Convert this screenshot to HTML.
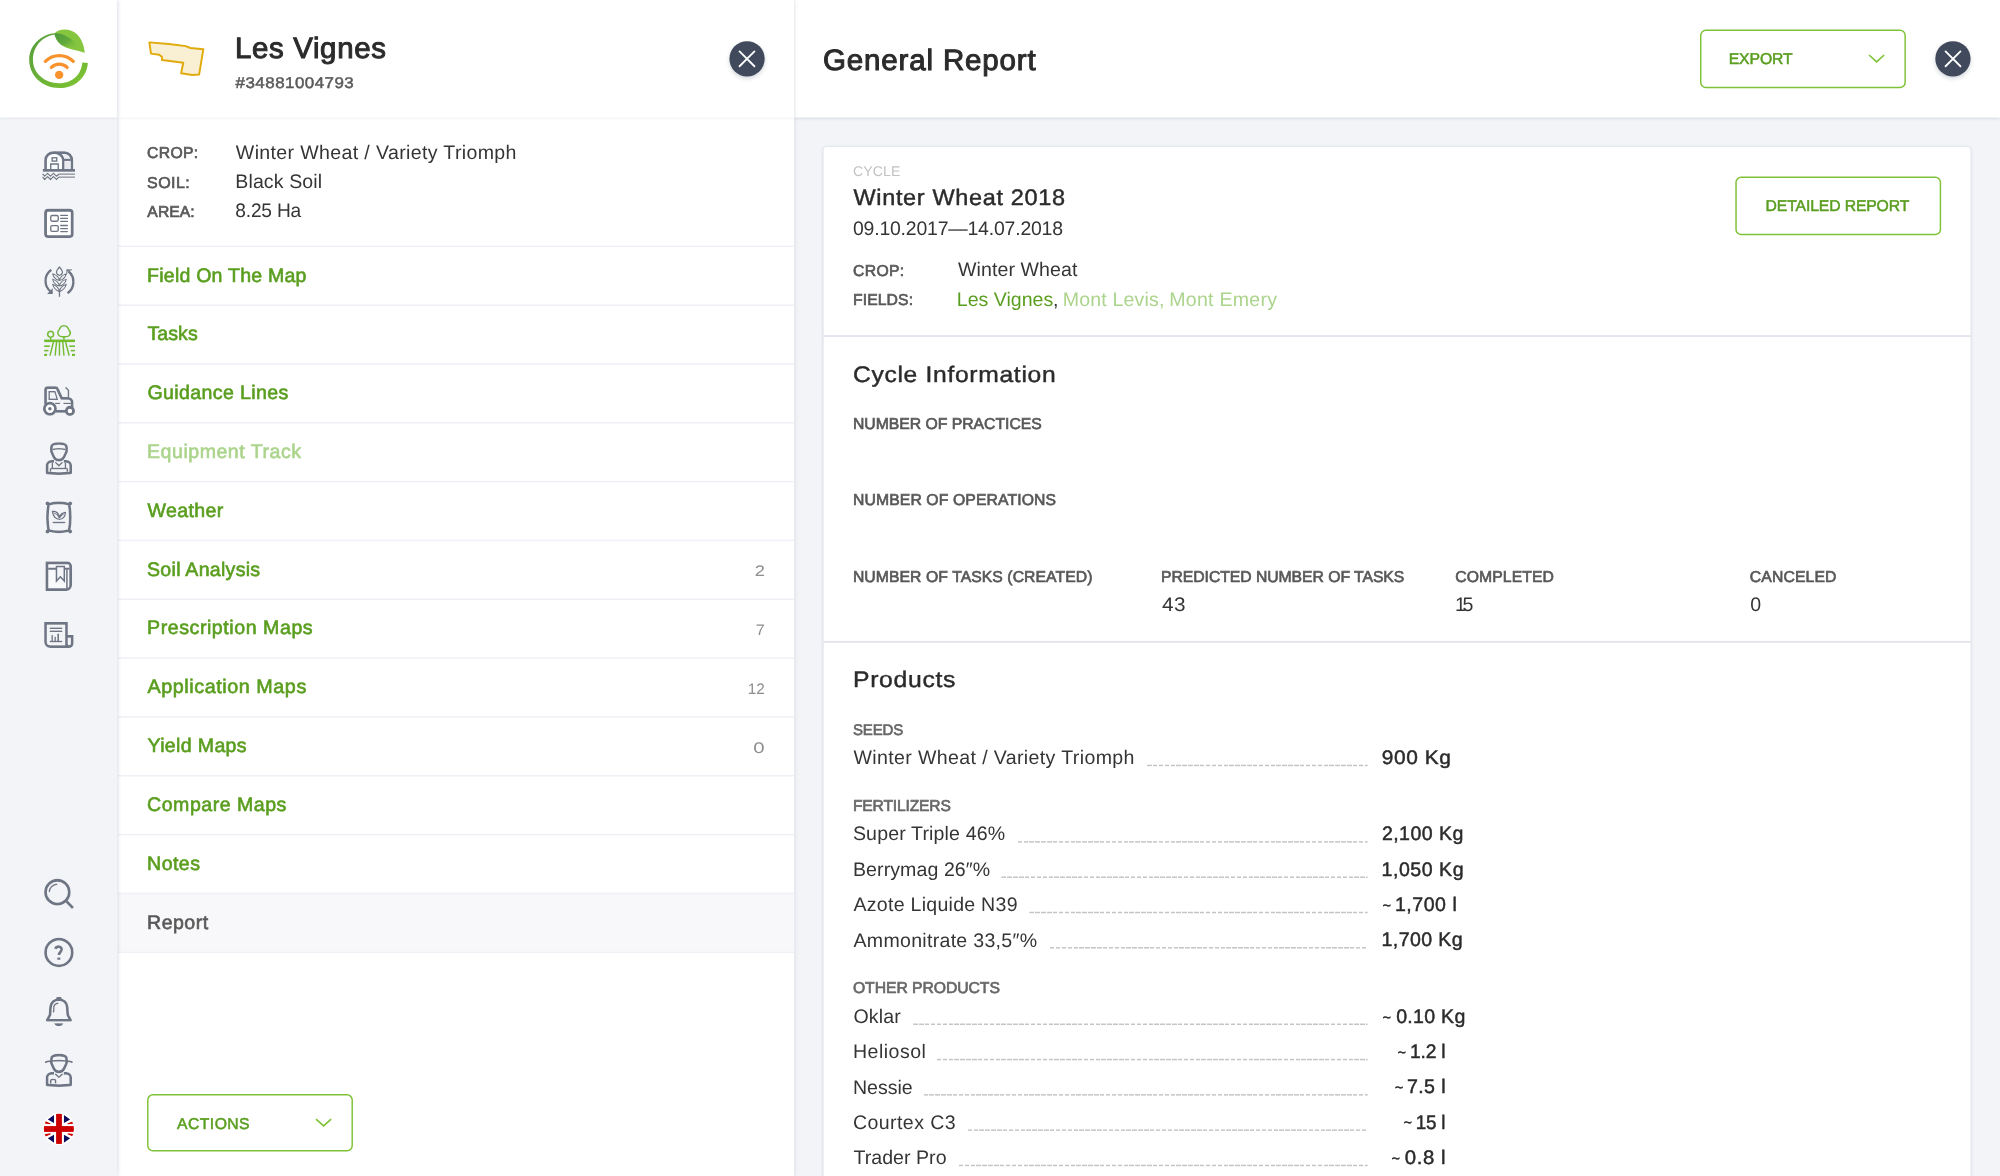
<!DOCTYPE html>
<html><head><meta charset="utf-8"><title>General Report</title>
<style>
html,body{margin:0;padding:0;width:2000px;height:1176px;overflow:hidden;background:#f2f4f8;}
#app{position:absolute;left:0;top:0;width:1360px;height:800px;transform:scale(1.470588);transform-origin:0 0;font-family:"Liberation Sans", sans-serif;overflow:hidden;background:#f2f4f8;}
.t{position:absolute;left:0;top:0;white-space:nowrap;transform-origin:0 0;text-rendering:geometricPrecision;}
.abs{position:absolute;}
#side{left:0;top:0;width:80px;height:800px;background:#f2f4f8;box-shadow:0.5px 0 2.2px rgba(60,70,110,.22);}
#logo{left:0;top:0;width:80px;height:80px;background:#fff;box-shadow:0 0.5px 2px rgba(60,70,110,.22);clip-path:inset(0 0 -6px 0);}
#lp{left:80px;top:0;width:460px;height:800px;background:#fff;box-shadow:0.5px 0 2.2px rgba(60,70,110,.12);}
#lph{left:80px;top:0;width:460px;height:80px;background:#fff;box-shadow:0 0.5px 2.4px rgba(60,70,110,.17);clip-path:inset(0 0 -6px 0);}
#rp{left:540px;top:0;width:820px;height:800px;background:#f2f4f8;}
#rph{left:540px;top:0;width:820px;height:80px;background:#fff;box-shadow:0 0.5px 2.2px rgba(60,70,110,.24);}
#card{left:560px;top:100px;width:780px;height:720px;background:#fff;border-radius:2px;box-shadow:0 0 2px rgba(60,70,100,.18);}
.chr{position:absolute;left:560px;width:780px;height:1px;background:#dadde7;}
.hr{position:absolute;left:80px;width:460px;height:1px;background:#eef0f5;}
#sel{left:80px;top:607.5px;width:460px;height:39.5px;background:#f8f8fa;}
.btn{position:absolute;box-sizing:border-box;border:1.15px solid #7ec237;border-radius:4px;background:#fff;}
.dots{position:absolute;height:1px;background:repeating-linear-gradient(90deg,#c4c4c4 0,#c4c4c4 3.05px,transparent 3.05px,transparent 4px);}
.close{position:absolute;width:24px;height:24px;border-radius:12px;background:#404a5c;box-shadow:0 1.5px 3px rgba(30,40,60,.18);}
.ic{position:absolute;overflow:visible;}
</style></head><body><div id="app">
<div id="rp" class="abs"></div>
<div id="card" class="abs"></div>
<div class="chr" style="top:227.6px"></div>
<div class="chr" style="top:435.6px"></div>
<div id="rph" class="abs"></div>
<div id="lp" class="abs"></div>
<div id="sel" class="abs"></div>
<div class="hr" style="top:167px"></div>
<div class="hr" style="top:207px"></div>
<div class="hr" style="top:247px"></div>
<div class="hr" style="top:287px"></div>
<div class="hr" style="top:327px"></div>
<div class="hr" style="top:367px"></div>
<div class="hr" style="top:407px"></div>
<div class="hr" style="top:447px"></div>
<div class="hr" style="top:487px"></div>
<div class="hr" style="top:527px"></div>
<div class="hr" style="top:567px"></div>
<div class="hr" style="top:607px"></div>
<div class="hr" style="top:647px"></div>
<div id="lph" class="abs"></div>
<div id="side" class="abs"></div>
<div id="logo" class="abs"></div>
<div class="btn" style="left:100px;top:744px;width:140px;height:39.3px"></div>
<div class="btn" style="left:1156px;top:20px;width:140px;height:39.8px"></div>
<div class="btn" style="left:1180px;top:120px;width:140px;height:39.6px"></div>
<div class="close" style="left:496px;top:28px"></div>
<div class="close" style="left:1316px;top:28px"></div>
<svg id="ov" style="position:absolute;left:0;top:0;overflow:visible" width="1360" height="800" viewBox="0 0 2000 1176.470588">
<defs><filter id="halo" x="-20%" y="-20%" width="140%" height="140%"><feDropShadow dx="0" dy="0" stdDeviation="0.7" flood-color="#fff" flood-opacity="1"/></filter></defs>
<g filter="url(#halo)">
<g transform="translate(37,142) scale(0.037415)" fill="none" stroke-linecap="butt" stroke-linejoin="round">
<path d="M228 722 V478 A212 196 0 0 1 440 283 H735 A195 196 0 0 1 930 478 V722 Z" fill="#fbfcfd" stroke="none"/>
<path d="M228 722 V478 A212 196 0 0 1 440 283 H735 A195 196 0 0 1 930 478 V722" stroke="#6e7585" stroke-width="72"/>
<path d="M440 283 A262 200 0 0 1 702 480 V722" stroke="#6e7585" stroke-width="64"/>
<path d="M665 322 C 770 330 850 380 885 452 L 730 452 C 720 400 700 355 665 322 Z" fill="#eceef3" stroke="none"/>
<path d="M720 478 H900" stroke="#6e7585" stroke-width="56"/>
<rect x="742" y="520" width="160" height="200" fill="#e9ebf1" stroke="none"/>
<rect x="405" y="422" width="122" height="88" stroke="#6e7585" stroke-width="36" stroke-linejoin="miter"/>
<path d="M367 722 V587 H567 V722" stroke="#6e7585" stroke-width="36" stroke-linejoin="miter"/>
<rect x="155" y="722" width="860" height="74" fill="#6e7585" stroke="none"/>
<path d="M148 848 L205 912 L282 838 L360 915 L440 838 L520 912 L590 860 H1015" stroke="#6e7585" stroke-width="34" stroke-linejoin="miter"/>
<path d="M148 930 L205 1002 L282 926 L360 1004 L440 926 L520 1002 L590 938 H1015" stroke="#6e7585" stroke-width="34" stroke-linejoin="miter"/>
</g>
<g transform="translate(37,201) scale(0.037415)" fill="none" stroke-linecap="butt" stroke-linejoin="round">
<rect x="228" y="248" width="714" height="704" rx="70" fill="#fff" stroke="#6e7585" stroke-width="76"/>
<rect x="367" y="388" width="201" height="154" rx="38" stroke="#6e7585" stroke-width="36"/>
<rect x="367" y="658" width="201" height="154" rx="38" stroke="#6e7585" stroke-width="36"/>
<path d="M635 385 H812 M635 465 H812 M635 545 H812 M635 655 H812 M635 737 H812 M635 817 H812" stroke="#6e7585" stroke-width="36" stroke-linecap="round"/>
</g>
<g transform="translate(37,260) scale(0.037415)" fill="none" stroke-linecap="butt" stroke-linejoin="round">
<path d="M385 262 C 180 400 175 700 372 850" stroke="#6e7585" stroke-width="66"/>
<path d="M268 906 H422 V750 Z" fill="#6e7585" stroke="none"/>
<path d="M815 888 C 1020 750 1025 450 838 300" stroke="#6e7585" stroke-width="66"/>
<path d="M782 248 H936 V276 L 820 300 L 800 392 H782 Z" fill="#6e7585" stroke="none"/>
<path d="M600 840 V985" stroke="#6e7585" stroke-width="38"/>
<path d="M600 188 C 545 250 512 300 524 345 C 540 392 580 405 600 412 C 620 405 660 392 676 345 C 688 300 655 250 600 188 Z" stroke="#6e7585" stroke-width="38"/>
<path d="M600 548 C 535 532 445 475 418 368 C 500 392 585 458 600 548 Z M600 548 C 665 532 755 475 782 368 C 700 392 615 458 600 548 Z" stroke="#6e7585" stroke-width="31"/>
<path d="M600 695 C 535 679 445 622 418 515 C 500 540 585 605 600 695 Z M600 695 C 665 679 755 622 782 515 C 700 540 615 605 600 695 Z" stroke="#6e7585" stroke-width="31"/>
<path d="M600 848 C 535 825 450 760 418 652 C 500 678 585 750 600 848 Z M600 848 C 665 825 750 760 782 652 C 700 678 615 750 600 848 Z" stroke="#6e7585" stroke-width="31"/>
</g>
<g transform="translate(37,318) scale(0.037415)" fill="none" stroke-linecap="butt" stroke-linejoin="round">
<rect x="190" y="572" width="826" height="74" fill="#74bd29" stroke="none"/>
<circle cx="365" cy="437" r="78" stroke="#74bd29" stroke-width="44"/>
<path d="M365 515 V600" stroke="#74bd29" stroke-width="44"/>
<path d="M720 207 C 640 207 612 262 602 302 C 560 340 548 402 574 450 C 600 498 660 505 720 505 C 780 505 850 498 876 450 C 902 402 882 340 842 302 C 830 262 800 207 720 207 Z" stroke="#74bd29" stroke-width="44"/>
<path d="M720 505 V600" stroke="#74bd29" stroke-width="44"/>
<path d="M440 640 L345 1010 M522 640 L485 1010 M600 640 V1010 M688 640 L722 1010 M765 640 L860 1010" stroke="#74bd29" stroke-width="44"/>
<path d="M190 750 H345 M860 750 H1015 M190 870 H310 M900 870 H1015" stroke="#74bd29" stroke-width="46"/>
<path d="M190 985 H270 M935 985 H1015" stroke="#74bd29" stroke-width="58"/>
</g>
<g transform="translate(37,378) scale(0.037415)" fill="none" stroke-linecap="butt" stroke-linejoin="round">
<path d="M228 700 V320 A62 62 0 0 1 290 258 H500 A50 50 0 0 1 545 290 L660 545 H830 A108 108 0 0 1 938 653 V790" stroke="#6e7585" stroke-width="74"/>
<path d="M490 892 H770" stroke="#6e7585" stroke-width="72"/>
<circle cx="345" cy="820" r="150" fill="#fff" stroke="#6e7585" stroke-width="74"/>
<circle cx="345" cy="820" r="46" fill="#6e7585" stroke="none"/>
<circle cx="880" cy="880" r="98" fill="#fff" stroke="#6e7585" stroke-width="76"/>
<path d="M325 365 H480 L540 565 H325 Z" stroke="#6e7585" stroke-width="40" stroke-linejoin="miter"/>
<path d="M762 250 L840 328 V520" stroke="#6e7585" stroke-width="40" stroke-linejoin="miter"/>
<path d="M485 680 H615 M705 680 H905" stroke="#6e7585" stroke-width="34"/>
</g>
<g transform="translate(37,436) scale(0.037415)" fill="none" stroke-linecap="butt" stroke-linejoin="round">
<path d="M455 680 H380 A110 110 0 0 0 270 790 V985 C 470 1012 700 1012 900 985 V790 A110 110 0 0 0 790 680 H715" stroke="#6e7585" stroke-width="72"/>
<path d="M385 300 C 385 225 470 200 585 200 C 700 200 790 225 790 300 V415 L 722 560 C 690 625 640 645 585 645 C 530 645 480 625 450 560 L 385 415 Z" stroke="#6e7585" stroke-width="72"/>
<path d="M488 700 L585 792 L682 700" stroke="#6e7585" stroke-width="40" stroke-linejoin="miter"/>
<path d="M420 362 C 500 335 670 335 752 362" stroke="#6e7585" stroke-width="42"/>
<path d="M410 715 V865 M760 715 V865 M375 868 H795 M360 862 V955 M810 862 V955" stroke="#6e7585" stroke-width="40"/></g>
<g transform="translate(37,495) scale(0.037415)" fill="none" stroke-linecap="butt" stroke-linejoin="round">
<path d="M312 248 C 480 205 690 205 858 248 C 900 480 900 720 858 950 C 690 995 480 995 312 950 C 268 720 268 480 312 248 Z" stroke="#6e7585" stroke-width="72"/>
<circle cx="280" cy="225" r="52" fill="#6e7585" stroke="none"/><circle cx="887" cy="225" r="52" fill="#6e7585" stroke="none"/>
<circle cx="280" cy="975" r="52" fill="#6e7585" stroke="none"/><circle cx="887" cy="975" r="52" fill="#6e7585" stroke="none"/>
<path d="M412 437 C 505 432 575 490 598 590 C 635 505 700 470 760 467 C 752 565 700 640 600 652 C 500 640 430 562 412 437 Z" stroke="#6e7585" stroke-width="38"/>
<path d="M458 488 C 525 505 575 555 598 620 M715 508 C 662 525 622 565 602 620" stroke="#6e7585" stroke-width="34"/>
<path d="M435 735 H740" stroke="#6e7585" stroke-width="40" stroke-linecap="round"/>
</g>
<g transform="translate(37,554) scale(0.037415)" fill="none" stroke-linecap="butt" stroke-linejoin="round">
<path d="M265 238 H815 A85 85 0 0 1 900 323 V835 A115 115 0 0 1 785 950 H265 Z" fill="#f8f9fb" stroke="#6e7585" stroke-width="72" stroke-linejoin="miter"/>
<path d="M300 395 H515 M740 395 H865" stroke="#6e7585" stroke-width="52"/>
<path d="M800 420 V915" stroke="#6e7585" stroke-width="40"/>
<path d="M520 335 H730 V722 L625 610 L520 722 Z" fill="#f3f5f9" stroke="#6e7585" stroke-width="40" stroke-linejoin="miter"/>
</g>
<g transform="translate(37,613) scale(0.037415)" fill="none" stroke-linecap="butt" stroke-linejoin="round">
<path d="M788 845 V275 H228 V775 A125 125 0 0 0 353 900 H855 A85 85 0 0 0 940 815 V625 H790" stroke="#6e7585" stroke-width="72" stroke-linejoin="miter"/>
<path d="M788 830 A70 70 0 0 0 858 900" stroke="#6e7585" stroke-width="72"/>
<path d="M355 410 H660 M355 490 H660 M355 765 H660" stroke="#6e7585" stroke-width="40" stroke-linecap="round"/>
<path d="M405 600 V750 M485 645 V750" stroke="#6e7585" stroke-width="40" stroke-linecap="round"/>
<path d="M565 568 V750" stroke="#6e7585" stroke-width="46" stroke-linecap="round"/>
</g>
<g transform="translate(37,871) scale(0.037415)" fill="none" stroke-linecap="butt" stroke-linejoin="round">
<circle cx="545" cy="565" r="318" stroke="#6e7585" stroke-width="74"/>
<path d="M785 810 L962 988" stroke="#6e7585" stroke-width="76"/>
<path d="M330 548 A216 216 0 0 1 528 352" stroke="#6e7585" stroke-width="40" stroke-linecap="round"/>
</g>
<g transform="translate(37,930) scale(0.037415)" fill="none" stroke-linecap="butt" stroke-linejoin="round">
<circle cx="585" cy="600" r="357" stroke="#6e7585" stroke-width="74"/>
<path d="M492 505 C 505 440 620 415 655 490 C 688 565 592 590 582 668" stroke="#6e7585" stroke-width="74"/>
<rect x="540" y="735" width="86" height="62" fill="#6e7585" stroke="none"/>
</g>
<g transform="translate(37,989) scale(0.037415)" fill="none" stroke-linecap="butt" stroke-linejoin="round">
<path d="M272 835 L345 700 C 362 640 350 560 365 470 C 385 340 480 287 585 287 C 690 287 785 340 805 470 C 820 560 808 640 825 700 L898 835 Z" stroke="#6e7585" stroke-width="72"/>
<path d="M548 247 H624" stroke="#6e7585" stroke-width="70" stroke-linecap="round"/>
<path d="M460 915 H702 C 690 970 640 992 581 992 C 522 992 472 970 460 915 Z" fill="#6e7585" stroke="none"/>
<path d="M558 378 C 470 390 442 460 450 525 C 454 560 450 590 440 612" stroke="#6e7585" stroke-width="40" stroke-linecap="round"/>
</g>
<g transform="translate(37,1048) scale(0.037415)" fill="none" stroke-linecap="butt" stroke-linejoin="round">
<path d="M455 680 H380 A110 110 0 0 0 270 790 V985 C 470 1012 700 1012 900 985 V790 A110 110 0 0 0 790 680 H715" stroke="#6e7585" stroke-width="72"/>
<path d="M385 292 C 385 217 470 192 585 192 C 700 192 790 217 790 292 V407 L 722 552 C 690 617 640 637 585 637 C 530 637 480 617 450 552 L 385 407 Z" stroke="#6e7585" stroke-width="72"/>
<path d="M488 692 L585 784 L682 692" stroke="#6e7585" stroke-width="40" stroke-linejoin="miter"/>
<path d="M232 378 C 330 345 450 338 585 338 C 720 338 840 345 936 378" stroke="#6e7585" stroke-width="44" stroke-linecap="round"/>
<path d="M367 950 V878 A36 36 0 0 1 403 842 H460 A36 36 0 0 1 496 878 V950" stroke="#6e7585" stroke-width="44"/></g>
<g transform="translate(37,1107) scale(0.037415)" fill="none" stroke-linecap="butt" stroke-linejoin="round">
<defs><clipPath id="fc"><circle cx="585" cy="585" r="402"/></clipPath></defs>
<circle cx="585" cy="585" r="425" fill="#fff" stroke="none"/>
<g clip-path="url(#fc)" stroke="none">
<path d="M290 335 L455 215 V425 Z M720 215 L885 335 L720 425 Z M290 835 L455 745 V955 Z M720 745 L885 835 L720 955 Z" fill="#08085f"/>
<path d="M205 368 L362 440 L352 462 L195 440 Z M965 378 L812 442 L822 464 L972 446 Z M205 800 L368 726 L358 704 L195 730 Z M965 790 L816 726 L826 704 L972 724 Z" fill="#cc0000"/>
<rect x="510" y="160" width="156" height="850" fill="#cc0000"/>
<rect x="160" y="510" width="850" height="156" fill="#cc0000"/>
</g>
</g>
</g>
<g transform="translate(19,19) scale(0.068027)">
<defs>
<linearGradient id="lg1" x1="0.1" y1="0.1" x2="0.9" y2="0.9"><stop offset="0" stop-color="#58a03a"/><stop offset="1" stop-color="#7cc232"/></linearGradient>
<linearGradient id="lg2" x1="0" y1="0.1" x2="1" y2="0.9"><stop offset="0" stop-color="#4d993d"/><stop offset="0.5" stop-color="#62aa3b"/><stop offset="1" stop-color="#86c63f" stop-opacity="0"/></linearGradient>
</defs>
<path d="M525 208 C 330 225 150 380 150 600 C 150 830 340 1015 590 1015 C 830 1015 1000 850 1012 645 L 930 640 C 920 810 790 945 590 945 C 380 945 205 800 205 600 C 205 400 350 250 528 228 Z" fill="url(#lg1)"/>
<path d="M520 212 C 580 150 720 130 820 200 C 920 270 960 400 966 497 C 860 455 700 450 610 370 C 555 320 530 265 520 212 Z" fill="#86c63f"/>
<path d="M520 212 C 640 200 800 290 900 440 C 800 430 690 420 610 370 C 555 320 530 265 520 212 Z" fill="url(#lg2)"/>
<circle cx="590" cy="822" r="61" fill="#f8922d"/>
<path d="M476 712 A 165 165 0 0 1 708 712" fill="none" stroke="#f8922d" stroke-width="48" stroke-linecap="round"/>
<path d="M388 622 A 290 290 0 0 1 798 622" fill="none" stroke="#f8922d" stroke-width="48" stroke-linecap="round"/>
</g>
<g transform="translate(140,30) scale(0.046758)">
<path d="M200 265 L620 300 L980 345 L1080 385 L1355 410 L1265 950 L1120 962 L880 925 L925 700 L470 640 L470 575 L410 530 L235 505 Z" fill="#f9efd3" stroke="#e0ab0d" stroke-width="42" stroke-linejoin="round"/>
</g>
<path d="M316.05 1119.10 L323.60 1125.90 L331.15 1119.10" fill="none" stroke="#7ec237" stroke-width="1.6"/><path d="M1869.05 55.00 L1876.60 61.80 L1884.15 55.00" fill="none" stroke="#7ec237" stroke-width="1.6"/><path d="M739.55 51.35 L754.45 66.25 M754.45 51.35 L739.55 66.25" fill="none" stroke="#fff" stroke-width="1.8" stroke-linecap="round"/><path d="M1945.55 51.35 L1960.45 66.25 M1960.45 51.35 L1945.55 66.25" fill="none" stroke="#fff" stroke-width="1.8" stroke-linecap="round"/>
</svg>

<div class="dots" style="left:779.65px;width:150.85px;top:519.60px"></div>
<div class="dots" style="left:691.93px;width:238.57px;top:571.60px"></div>
<div class="dots" style="left:680.98px;width:249.52px;top:595.90px"></div>
<div class="dots" style="left:700.09px;width:230.41px;top:619.85px"></div>
<div class="dots" style="left:713.56px;width:216.94px;top:643.80px"></div>
<div class="dots" style="left:620.60px;width:309.90px;top:695.70px"></div>
<div class="dots" style="left:636.78px;width:293.72px;top:719.70px"></div>
<div class="dots" style="left:628.08px;width:302.42px;top:743.70px"></div>
<div class="dots" style="left:657.73px;width:272.77px;top:767.70px"></div>
<div class="dots" style="left:651.61px;width:278.89px;top:791.70px"></div>
<div class="t" style="transform:translate(159.73px,23.65px);font-size:20px;line-height:20px;color:#2b2b2b;letter-spacing:0.455px;word-spacing:0px;font-weight:400;-webkit-text-stroke:0.034em currentColor;">Les Vignes</div>
<div class="t" style="transform:translate(160.21px,51.68px) scaleX(1.0859);font-size:10.6px;line-height:10.6px;color:#5a5a5a;letter-spacing:0.297px;word-spacing:0px;font-weight:400;-webkit-text-stroke:0.032em currentColor;">#34881004793</div>
<div class="t" style="transform:translate(100.00px,99.63px);font-size:10.7px;line-height:10.7px;color:#575757;letter-spacing:0.225px;word-spacing:0px;font-weight:400;-webkit-text-stroke:0.042em currentColor;">CROP:</div>
<div class="t" style="transform:translate(100.00px,119.62px) scaleX(1.0180);font-size:10.7px;line-height:10.7px;color:#575757;letter-spacing:0.300px;word-spacing:0px;font-weight:400;-webkit-text-stroke:0.042em currentColor;">SOIL:</div>
<div class="t" style="transform:translate(100.20px,139.61px);font-size:10.7px;line-height:10.7px;color:#575757;letter-spacing:0.034px;word-spacing:0px;font-weight:400;-webkit-text-stroke:0.042em currentColor;">AREA:</div>
<div class="t" style="transform:translate(160.35px,96.85px);font-size:13.3px;line-height:13.3px;color:#353535;letter-spacing:0.245px;word-spacing:0px;font-weight:400;">Winter Wheat / Variety Triomph</div>
<div class="t" style="transform:translate(160.00px,116.84px);font-size:13.3px;line-height:13.3px;color:#353535;letter-spacing:0.071px;word-spacing:0px;font-weight:400;">Black Soil</div>
<div class="t" style="transform:translate(160.00px,136.83px) scaleX(0.9799);font-size:13.3px;line-height:13.3px;color:#353535;letter-spacing:-0.133px;word-spacing:0px;font-weight:400;">8.25 Ha</div>
<div class="t" style="transform:translate(100.00px,180.44px);font-size:13.3px;line-height:13.3px;color:#5a9e1f;letter-spacing:0.149px;word-spacing:0px;font-weight:400;-webkit-text-stroke:0.032em currentColor;">Field On The Map</div>
<div class="t" style="transform:translate(100.30px,220.44px);font-size:13.3px;line-height:13.3px;color:#5a9e1f;letter-spacing:0.038px;word-spacing:0px;font-weight:400;-webkit-text-stroke:0.032em currentColor;">Tasks</div>
<div class="t" style="transform:translate(100.30px,260.44px);font-size:13.3px;line-height:13.3px;color:#5a9e1f;letter-spacing:0.257px;word-spacing:0px;font-weight:400;-webkit-text-stroke:0.032em currentColor;">Guidance Lines</div>
<div class="t" style="transform:translate(100.00px,300.44px);font-size:13.3px;line-height:13.3px;color:#abd48c;letter-spacing:0.350px;word-spacing:0px;font-weight:400;-webkit-text-stroke:0.032em currentColor;">Equipment Track</div>
<div class="t" style="transform:translate(100.30px,340.44px);font-size:13.3px;line-height:13.3px;color:#5a9e1f;letter-spacing:0.253px;word-spacing:0px;font-weight:400;-webkit-text-stroke:0.032em currentColor;">Weather</div>
<div class="t" style="transform:translate(100.00px,380.44px);font-size:13.3px;line-height:13.3px;color:#5a9e1f;letter-spacing:0.184px;word-spacing:0px;font-weight:400;-webkit-text-stroke:0.032em currentColor;">Soil Analysis</div>
<div class="t" style="transform:translate(513.16px,384.91px) scaleX(1.1996);font-size:10.4px;line-height:10.4px;color:#8e8e8e;letter-spacing:0.000px;word-spacing:0px;font-weight:400;">2</div>
<div class="t" style="transform:translate(100.00px,420.44px) scaleX(1.0021);font-size:13.3px;line-height:13.3px;color:#5a9e1f;letter-spacing:0.372px;word-spacing:0px;font-weight:400;-webkit-text-stroke:0.032em currentColor;">Prescription Maps</div>
<div class="t" style="transform:translate(513.90px,424.91px) scaleX(1.0601);font-size:10.4px;line-height:10.4px;color:#8e8e8e;letter-spacing:0.000px;word-spacing:0px;font-weight:400;">7</div>
<div class="t" style="transform:translate(100.30px,460.44px) scaleX(1.0105);font-size:13.3px;line-height:13.3px;color:#5a9e1f;letter-spacing:0.372px;word-spacing:0px;font-weight:400;-webkit-text-stroke:0.032em currentColor;">Application Maps</div>
<div class="t" style="transform:translate(508.40px,464.91px);font-size:10.4px;line-height:10.4px;color:#8e8e8e;letter-spacing:0.044px;word-spacing:0px;font-weight:400;">12</div>
<div class="t" style="transform:translate(100.30px,500.44px);font-size:13.3px;line-height:13.3px;color:#5a9e1f;letter-spacing:0.233px;word-spacing:0px;font-weight:400;-webkit-text-stroke:0.032em currentColor;">Yield Maps</div>
<div class="t" style="transform:translate(512.22px,504.91px) scaleX(1.3338);font-size:10.4px;line-height:10.4px;color:#8e8e8e;letter-spacing:0.000px;word-spacing:0px;font-weight:400;">0</div>
<div class="t" style="transform:translate(100.00px,540.44px);font-size:13.3px;line-height:13.3px;color:#5a9e1f;letter-spacing:0.348px;word-spacing:0px;font-weight:400;-webkit-text-stroke:0.032em currentColor;">Compare Maps</div>
<div class="t" style="transform:translate(100.00px,580.44px);font-size:13.3px;line-height:13.3px;color:#5a9e1f;letter-spacing:0.314px;word-spacing:0px;font-weight:400;-webkit-text-stroke:0.032em currentColor;">Notes</div>
<div class="t" style="transform:translate(100.00px,620.44px);font-size:13.3px;line-height:13.3px;color:#595959;letter-spacing:0.320px;word-spacing:0px;font-weight:400;-webkit-text-stroke:0.032em currentColor;">Report</div>
<div class="t" style="transform:translate(120.43px,759.48px);font-size:10.7px;line-height:10.7px;color:#5a9e1f;letter-spacing:0.297px;word-spacing:0px;font-weight:400;-webkit-text-stroke:0.032em currentColor;">ACTIONS</div>
<div class="t" style="transform:translate(559.65px,31.42px) scaleX(1.0042);font-size:20px;line-height:20px;color:#2b2b2b;letter-spacing:0.560px;word-spacing:0px;font-weight:400;-webkit-text-stroke:0.034em currentColor;">General Report</div>
<div class="t" style="transform:translate(1175.50px,35.68px);font-size:10.7px;line-height:10.7px;color:#5a9e1f;letter-spacing:-0.043px;word-spacing:0px;font-weight:400;-webkit-text-stroke:0.032em currentColor;">EXPORT</div>
<div class="t" style="transform:translate(580.00px,113.00px);font-size:9.6px;line-height:9.6px;color:#c2c2c2;letter-spacing:0.073px;word-spacing:0px;font-weight:400;">CYCLE</div>
<div class="t" style="transform:translate(580.35px,127.59px) scaleX(1.0446);font-size:15.3px;line-height:15.3px;color:#2b2b2b;letter-spacing:0.428px;word-spacing:0px;font-weight:400;-webkit-text-stroke:0.019em currentColor;">Winter Wheat 2018</div>
<div class="t" style="transform:translate(580.00px,149.10px) scaleX(0.9939);font-size:13.3px;line-height:13.3px;color:#353535;letter-spacing:-0.133px;word-spacing:0px;font-weight:400;">09.10.2017—14.07.2018</div>
<div class="t" style="transform:translate(580.00px,179.68px);font-size:10.7px;line-height:10.7px;color:#575757;letter-spacing:0.259px;word-spacing:0px;font-weight:400;-webkit-text-stroke:0.042em currentColor;">CROP:</div>
<div class="t" style="transform:translate(580.00px,199.68px);font-size:10.7px;line-height:10.7px;color:#575757;letter-spacing:0.078px;word-spacing:0px;font-weight:400;-webkit-text-stroke:0.042em currentColor;">FIELDS:</div>
<div class="t" style="transform:translate(651.44px,176.90px);font-size:13.3px;line-height:13.3px;color:#353535;letter-spacing:0.060px;word-spacing:0px;font-weight:400;">Winter Wheat</div>
<div class="t" style="transform:translate(650.60px,196.90px);font-size:13.3px;line-height:13.3px;color:#5a9e1f;letter-spacing:0.002px;word-spacing:0px;font-weight:400;">Les Vignes</div>
<div class="t" style="transform:translate(716.09px,196.90px);font-size:13.3px;line-height:13.3px;color:#353535;letter-spacing:0.450px;word-spacing:0px;font-weight:400;">,</div>
<div class="t" style="transform:translate(722.65px,196.90px);font-size:13.3px;line-height:13.3px;color:#abd48c;letter-spacing:0.118px;word-spacing:0px;font-weight:400;">Mont Levis,</div>
<div class="t" style="transform:translate(795.07px,196.90px);font-size:13.3px;line-height:13.3px;color:#abd48c;letter-spacing:0.178px;word-spacing:0px;font-weight:400;">Mont Emery</div>
<div class="t" style="transform:translate(1200.59px,135.73px);font-size:10.7px;line-height:10.7px;color:#5a9e1f;letter-spacing:-0.075px;word-spacing:0px;font-weight:400;-webkit-text-stroke:0.032em currentColor;">DETAILED REPORT</div>
<div class="t" style="transform:translate(580.00px,247.65px) scaleX(1.0950);font-size:15.3px;line-height:15.3px;color:#2b2b2b;letter-spacing:0.428px;word-spacing:0px;font-weight:400;-webkit-text-stroke:0.019em currentColor;">Cycle Information</div>
<div class="t" style="transform:translate(580.00px,283.68px);font-size:10.7px;line-height:10.7px;color:#575757;letter-spacing:0.009px;word-spacing:0px;font-weight:400;-webkit-text-stroke:0.042em currentColor;">NUMBER OF PRACTICES</div>
<div class="t" style="transform:translate(580.00px,335.68px);font-size:10.7px;line-height:10.7px;color:#575757;letter-spacing:0.093px;word-spacing:0px;font-weight:400;-webkit-text-stroke:0.042em currentColor;">NUMBER OF OPERATIONS</div>
<div class="t" style="transform:translate(580.00px,387.78px);font-size:10.7px;line-height:10.7px;color:#575757;letter-spacing:0.056px;word-spacing:0px;font-weight:400;-webkit-text-stroke:0.042em currentColor;">NUMBER OF TASKS (CREATED)</div>
<div class="t" style="transform:translate(789.46px,387.78px);font-size:10.7px;line-height:10.7px;color:#575757;letter-spacing:-0.017px;word-spacing:0px;font-weight:400;-webkit-text-stroke:0.042em currentColor;">PREDICTED NUMBER OF TASKS</div>
<div class="t" style="transform:translate(989.65px,387.78px);font-size:10.7px;line-height:10.7px;color:#575757;letter-spacing:0.056px;word-spacing:0px;font-weight:400;-webkit-text-stroke:0.042em currentColor;">COMPLETED</div>
<div class="t" style="transform:translate(1189.91px,387.78px);font-size:10.7px;line-height:10.7px;color:#575757;letter-spacing:0.096px;word-spacing:0px;font-weight:400;-webkit-text-stroke:0.042em currentColor;">CANCELED</div>
<div class="t" style="transform:translate(790.08px,404.60px) scaleX(1.0611);font-size:13.3px;line-height:13.3px;color:#353535;letter-spacing:0.372px;word-spacing:0px;font-weight:400;">43</div>
<div class="t" style="transform:translate(989.45px,404.60px);font-size:13.3px;line-height:13.3px;color:#353535;letter-spacing:0.450px;word-spacing:0px;font-weight:400;">1</div>
<div class="t" style="transform:translate(994.56px,404.60px);font-size:13.3px;line-height:13.3px;color:#353535;letter-spacing:0.450px;word-spacing:0px;font-weight:400;">5</div>
<div class="t" style="transform:translate(1190.13px,404.60px);font-size:13.3px;line-height:13.3px;color:#353535;letter-spacing:0.450px;word-spacing:0px;font-weight:400;">0</div>
<div class="t" style="transform:translate(580.00px,455.45px) scaleX(1.0998);font-size:15.3px;line-height:15.3px;color:#2b2b2b;letter-spacing:0.428px;word-spacing:0px;font-weight:400;-webkit-text-stroke:0.019em currentColor;">Products</div>
<div class="t" style="transform:translate(580.00px,492.49px) scaleX(0.9817);font-size:10.4px;line-height:10.4px;color:#666;letter-spacing:-0.104px;word-spacing:0px;font-weight:400;-webkit-text-stroke:0.042em currentColor;">SEEDS</div>
<div class="t" style="transform:translate(580.00px,543.38px) scaleX(0.9928);font-size:10.7px;line-height:10.7px;color:#666;letter-spacing:-0.107px;word-spacing:0px;font-weight:400;-webkit-text-stroke:0.042em currentColor;">FERTILIZERS</div>
<div class="t" style="transform:translate(580.00px,667.38px);font-size:10.7px;line-height:10.7px;color:#666;letter-spacing:-0.034px;word-spacing:0px;font-weight:400;-webkit-text-stroke:0.042em currentColor;">OTHER PRODUCTS</div>
<div class="t" style="transform:translate(580.35px,508.50px);font-size:13.3px;line-height:13.3px;color:#353535;letter-spacing:0.252px;word-spacing:0px;font-weight:400;">Winter Wheat / Variety Triomph</div>
<div class="t" style="transform:translate(939.64px,508.34px) scaleX(1.0683);font-size:13.3px;line-height:13.3px;color:#2b2b2b;letter-spacing:0.372px;word-spacing:0px;font-weight:400;-webkit-text-stroke:0.024em currentColor;">900 Kg</div>
<div class="t" style="transform:translate(580.00px,560.50px);font-size:13.3px;line-height:13.3px;color:#353535;letter-spacing:0.096px;word-spacing:0px;font-weight:400;">Super Triple 46%</div>
<div class="t" style="transform:translate(939.68px,560.34px);font-size:13.3px;line-height:13.3px;color:#2b2b2b;letter-spacing:0.302px;word-spacing:0px;font-weight:400;-webkit-text-stroke:0.024em currentColor;">2,100 Kg</div>
<div class="t" style="transform:translate(580.00px,584.80px);font-size:13.3px;line-height:13.3px;color:#353535;letter-spacing:0.058px;word-spacing:0px;font-weight:400;">Berrymag 26″%</div>
<div class="t" style="transform:translate(939.47px,584.64px);font-size:13.3px;line-height:13.3px;color:#2b2b2b;letter-spacing:0.361px;word-spacing:0px;font-weight:400;-webkit-text-stroke:0.024em currentColor;">1,050 Kg</div>
<div class="t" style="transform:translate(580.35px,608.75px);font-size:13.3px;line-height:13.3px;color:#353535;letter-spacing:0.181px;word-spacing:0px;font-weight:400;">Azote Liquide N39</div>
<div class="t" style="transform:translate(948.52px,608.59px);font-size:13.3px;line-height:13.3px;color:#2b2b2b;letter-spacing:0.361px;word-spacing:0px;font-weight:400;-webkit-text-stroke:0.024em currentColor;">1,700 l</div>
<div class="t" style="transform:translate(940.21px,610.81px);font-size:9.4px;line-height:9.4px;color:#2b2b2b;letter-spacing:0.350px;word-spacing:0px;font-weight:400;-webkit-text-stroke:0.042em currentColor;">~</div>
<div class="t" style="transform:translate(580.35px,632.70px);font-size:13.3px;line-height:13.3px;color:#353535;letter-spacing:0.200px;word-spacing:0px;font-weight:400;">Ammonitrate 33,5″%</div>
<div class="t" style="transform:translate(939.47px,632.54px);font-size:13.3px;line-height:13.3px;color:#2b2b2b;letter-spacing:0.264px;word-spacing:0px;font-weight:400;-webkit-text-stroke:0.024em currentColor;">1,700 Kg</div>
<div class="t" style="transform:translate(580.35px,684.60px);font-size:13.3px;line-height:13.3px;color:#353535;letter-spacing:0.116px;word-spacing:0px;font-weight:400;">Oklar</div>
<div class="t" style="transform:translate(949.41px,684.44px);font-size:13.3px;line-height:13.3px;color:#2b2b2b;letter-spacing:0.191px;word-spacing:0px;font-weight:400;-webkit-text-stroke:0.024em currentColor;">0.10 Kg</div>
<div class="t" style="transform:translate(940.21px,686.66px);font-size:9.4px;line-height:9.4px;color:#2b2b2b;letter-spacing:0.350px;word-spacing:0px;font-weight:400;-webkit-text-stroke:0.042em currentColor;">~</div>
<div class="t" style="transform:translate(580.00px,708.60px);font-size:13.3px;line-height:13.3px;color:#353535;letter-spacing:0.335px;word-spacing:0px;font-weight:400;">Heliosol</div>
<div class="t" style="transform:translate(958.80px,708.44px) scaleX(0.9829);font-size:13.3px;line-height:13.3px;color:#2b2b2b;letter-spacing:-0.133px;word-spacing:0px;font-weight:400;-webkit-text-stroke:0.024em currentColor;">1.2 l</div>
<div class="t" style="transform:translate(950.41px,710.66px);font-size:9.4px;line-height:9.4px;color:#2b2b2b;letter-spacing:0.350px;word-spacing:0px;font-weight:400;-webkit-text-stroke:0.042em currentColor;">~</div>
<div class="t" style="transform:translate(580.00px,732.60px);font-size:13.3px;line-height:13.3px;color:#353535;letter-spacing:-0.009px;word-spacing:0px;font-weight:400;">Nessie</div>
<div class="t" style="transform:translate(956.75px,732.44px);font-size:13.3px;line-height:13.3px;color:#2b2b2b;letter-spacing:0.278px;word-spacing:0px;font-weight:400;-webkit-text-stroke:0.024em currentColor;">7.5 l</div>
<div class="t" style="transform:translate(948.64px,734.66px);font-size:9.4px;line-height:9.4px;color:#2b2b2b;letter-spacing:0.350px;word-spacing:0px;font-weight:400;-webkit-text-stroke:0.042em currentColor;">~</div>
<div class="t" style="transform:translate(580.00px,756.60px);font-size:13.3px;line-height:13.3px;color:#353535;letter-spacing:0.286px;word-spacing:0px;font-weight:400;">Courtex C3</div>
<div class="t" style="transform:translate(962.69px,756.44px) scaleX(0.9636);font-size:13.3px;line-height:13.3px;color:#2b2b2b;letter-spacing:-0.133px;word-spacing:0px;font-weight:400;-webkit-text-stroke:0.024em currentColor;">15 l</div>
<div class="t" style="transform:translate(954.56px,758.66px);font-size:9.4px;line-height:9.4px;color:#2b2b2b;letter-spacing:0.350px;word-spacing:0px;font-weight:400;-webkit-text-stroke:0.042em currentColor;">~</div>
<div class="t" style="transform:translate(580.35px,780.60px);font-size:13.3px;line-height:13.3px;color:#353535;letter-spacing:0.026px;word-spacing:0px;font-weight:400;">Trader Pro</div>
<div class="t" style="transform:translate(955.31px,780.44px) scaleX(1.0414);font-size:13.3px;line-height:13.3px;color:#2b2b2b;letter-spacing:0.372px;word-spacing:0px;font-weight:400;-webkit-text-stroke:0.024em currentColor;">0.8 l</div>
<div class="t" style="transform:translate(946.33px,782.66px);font-size:9.4px;line-height:9.4px;color:#2b2b2b;letter-spacing:0.350px;word-spacing:0px;font-weight:400;-webkit-text-stroke:0.042em currentColor;">~</div>
</div></body></html>
